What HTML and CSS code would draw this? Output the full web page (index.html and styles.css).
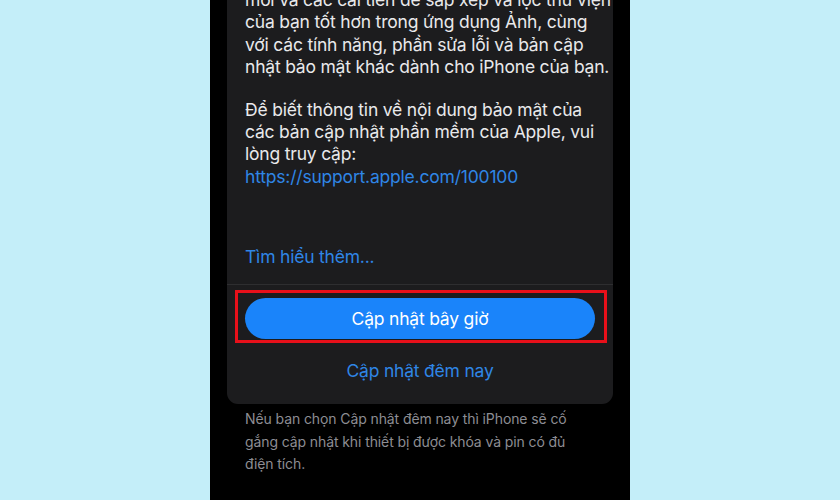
FILE: index.html
```html
<!DOCTYPE html>
<html lang="vi">
<head>
<meta charset="utf-8">
<link rel="stylesheet" href="styles.css">
</head>
<body>
<div class="phone">
  <div class="card">
    <div class="body">
      <p class="para">mới và các cải tiến để sắp xếp và lọc thư viện<br>của bạn tốt hơn trong ứng dụng Ảnh, cùng<br>với các tính năng, phần sửa lỗi và bản cập<br>nhật bảo mật khác dành cho iPhone của bạn.</p>
      <p class="para para2">Để biết thông tin về nội dung bảo mật của<br>các bản cập nhật phần mềm của Apple, vui<br>lòng truy cập:<br><span class="link">https://support.apple.com/100100</span></p>
      <p class="more">Tìm hiểu thêm...</p>
    </div>
    <div class="actions">
      <div class="btn">Cập nhật bây giờ</div>
      <div class="later">Cập nhật đêm nay</div>
      <div class="highlight"></div>
    </div>
  </div>
  <p class="note">Nếu bạn chọn Cập nhật đêm nay thì iPhone sẽ cố<br>gắng cập nhật khi thiết bị được khóa và pin có đủ<br>điện tích.</p>
</div>
</body>
</html>
```

FILE: styles.css
```css
* { box-sizing: border-box; }
html, body { margin: 0; padding: 0; }
body {
  background: #c4eef9;
  width: 840px;
  height: 500px;
  overflow: hidden;
  font-family: Inter, "Noto Sans", sans-serif;
}
.phone {
  margin-left: 210px;
  width: 420px;
  height: 500px;
  background: #000;
  overflow: hidden;
  padding: 0 17px;
}
.card {
  margin-top: -40px;
  background: #1c1c1e;
  border-radius: 11px;
}
.body {
  padding: 29px 18px 0 18px;
  border-bottom: 1px solid #2e2e30;
}
.para {
  margin: 0;
  color: #e9e9eb;
  font-size: 17.5px;
  line-height: 22.4px;
  letter-spacing: -0.2px;
  white-space: nowrap;
}
.para2 { margin-top: 20px; }
.link { color: #2f86e6; }
.more {
  margin: 58px 0 0 0;
  padding-bottom: 15px;
  color: #2f86e6;
  font-size: 17.5px;
  line-height: 22.4px;
  letter-spacing: -0.2px;
}
.actions {
  position: relative;
  padding: 13px 18px 22px 18px;
}
.btn {
  height: 41px;
  border-radius: 21px;
  background: #1a84fa;
  color: #fff;
  font-size: 17.5px;
  letter-spacing: -0.2px;
  display: flex;
  align-items: center;
  justify-content: center;
}
.later {
  margin-top: 21px;
  text-align: center;
  color: #2f86e6;
  font-size: 17.5px;
  line-height: 22.4px;
  letter-spacing: -0.2px;
}
.highlight {
  position: absolute;
  left: 8px;
  top: 5px;
  width: 372px;
  height: 53px;
  border: 3px solid #e8101a;
}
.note {
  margin: 4px 0 0 0;
  padding: 0 18px;
  color: #8d8d93;
  font-size: 14px;
  line-height: 22.5px;
  letter-spacing: -0.1px;
  white-space: nowrap;
}
```
